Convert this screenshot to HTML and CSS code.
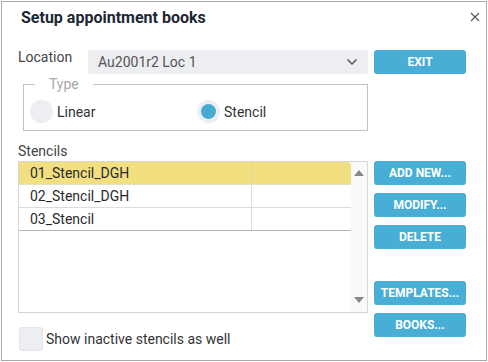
FILE: index.html
```html
<!DOCTYPE html>
<html lang="en">
<head>
  <meta charset="UTF-8" />
  <title>Setup appointment books</title>
  <link rel="stylesheet" href="styles.css">
</head>
<body>
  <div class="dialog">
    <div class="title-bar">
      <h1>Setup appointment books</h1>
      <button class="close" title="Close">
        <svg width="10" height="10" viewBox="0 0 10 10"><path d="M1 1 L9 9 M9 1 L1 9" stroke="#555" stroke-width="1.1" fill="none"/></svg>
      </button>
    </div>

    <div class="content">
      <div class="main">
        <div class="location-row">
          <span class="label">Location</span>
          <div class="select">
            <span>Au2001r2 Loc 1</span>
            <svg width="12" height="8" viewBox="0 0 12 8"><path d="M1.5 1.5 L6 6 L10.5 1.5" stroke="#555" stroke-width="1.5" fill="none"/></svg>
          </div>
        </div>

        <fieldset class="type">
          <legend>Type</legend>
          <div class="radios">
            <label class="radio"><span class="dot"></span>Linear</label>
            <label class="radio checked"><span class="dot"></span>Stencil</label>
          </div>
        </fieldset>

        <div class="label section">Stencils</div>
        <div class="list">
          <div class="rows">
            <div class="row selected"><span class="cell">01_Stencil_DGH</span><span class="cell"></span></div>
            <div class="row"><span class="cell">02_Stencil_DGH</span><span class="cell"></span></div>
            <div class="row last"><span class="cell">03_Stencil</span><span class="cell"></span></div>
          </div>
          <div class="scrollbar">
            <span class="arrow up"></span>
            <span class="arrow down"></span>
          </div>
        </div>

        <label class="check"><span class="box"></span>Show inactive stencils as well</label>
      </div>

      <div class="actions">
        <button class="btn exit">EXIT</button>
        <button class="btn add">ADD NEW...</button>
        <button class="btn">MODIFY...</button>
        <button class="btn">DELETE</button>
        <button class="btn templates">TEMPLATES...</button>
        <button class="btn">BOOKS...</button>
      </div>
    </div>
  </div>
</body>
</html>
```

FILE: styles.css
```css
body {
  margin: 0;
  font-family: Roboto, "Liberation Sans", sans-serif;
  font-size: 14px;
  color: #3a3a3a;
  background: #fff;
}
.dialog {
  margin: 1px;
  width: 486px;
  height: 360px;
  box-sizing: border-box;
  border: 1px solid #a9a9a9;
  background: #fff;
}
.title-bar {
  display: flex;
  justify-content: space-between;
  align-items: center;
  height: 30px;
  padding: 0 5px 0 19px;
}
.title-bar h1 {
  margin: 0;
  font-size: 16px;
  font-weight: bold;
  color: #1d2733;
}
.close {
  border: none;
  background: none;
  padding: 0;
  width: 12px;
  height: 12px;
  display: flex;
  align-items: center;
  justify-content: center;
}
.content {
  display: flex;
  gap: 6px;
  padding: 18px 0 0 16px;
}
.main {
  width: 350px;
}
.label {
  color: #444;
  line-height: 16px;
}
.location-row {
  display: flex;
  align-items: flex-start;
}
.location-row .label {
  width: 70px;
  margin-top: -1px;
}
.select {
  flex: 1;
  height: 24px;
  background: #eceef2;
  border-radius: 3px;
  display: flex;
  align-items: center;
  justify-content: space-between;
  padding: 0 10px;
  color: #555;
}
.type {
  margin: 2px 0 0 5px;
  padding: 0 0 7px 6px;
  border: 1px solid #c2c2c2;
  width: 345px;
  box-sizing: border-box;
}
.type legend {
  margin-left: 5px;
  padding: 0 14px;
  color: #a9a9a9;
  line-height: 16px;
}
.radios {
  display: grid;
  grid-template-columns: 167px 1fr;
  padding-top: 8px;
}
.radio {
  display: flex;
  align-items: center;
  gap: 4px;
  color: #333;
}
.radio .dot {
  width: 23px;
  height: 23px;
  border-radius: 50%;
  background: #eceef2;
  display: flex;
  align-items: center;
  justify-content: center;
}
.radio.checked .dot::after {
  content: "";
  width: 15px;
  height: 15px;
  border-radius: 50%;
  background: #46abd3;
}
.section {
  margin-top: 12px;
}
.list {
  margin-top: 2px;
  height: 152px;
  box-sizing: border-box;
  border: 1px solid #d6d6d6;
  display: flex;
}
.rows {
  flex: 1;
}
.row {
  display: grid;
  grid-template-columns: 232px 1fr;
  height: 23px;
  box-sizing: border-box;
  border-bottom: 1px solid #dcdcdc;
}
.row.last {
  border-bottom-color: #b4b4b4;
}
.row.selected {
  background: #f2df80;
  border-bottom-color: #e6e0c2;
  border-radius: 0 4px 0 0;
}
.cell {
  padding-left: 11px;
  line-height: 22px;
  color: #2a2a2a;
}
.cell + .cell {
  border-left: 1px solid #dcdcdc;
}
.row.selected .cell + .cell {
  border-left-color: #ddd2a0;
}
.scrollbar {
  width: 16px;
  background: #f9f9f9;
  display: flex;
  flex-direction: column;
  justify-content: space-between;
  align-items: center;
  padding: 8px 0 9px;
}
.arrow {
  width: 0;
  height: 0;
  border-left: 5px solid transparent;
  border-right: 5px solid transparent;
}
.arrow.up {
  border-bottom: 6px solid #888;
}
.arrow.down {
  border-top: 6px solid #888;
}
.check {
  display: flex;
  align-items: center;
  gap: 3px;
  margin-top: 14px;
  margin-left: 1px;
  color: #333;
}
.check .box {
  width: 24px;
  height: 24px;
  box-sizing: border-box;
  background: #eceef2;
  border: 1px solid #e2e4ea;
  border-radius: 3px;
}
.actions {
  display: flex;
  flex-direction: column;
  width: 92px;
}
.btn {
  height: 24px;
  border: none;
  border-radius: 3px;
  background: #48aed5;
  color: #fff;
  font-family: Roboto, "Liberation Sans", sans-serif;
  font-size: 12px;
  font-weight: bold;
  padding: 0;
  margin-top: 8px;
}
.btn.exit {
  margin-top: 0;
}
.btn.add {
  margin-top: 87px;
}
.btn.templates {
  margin-top: 32px;
}
```
